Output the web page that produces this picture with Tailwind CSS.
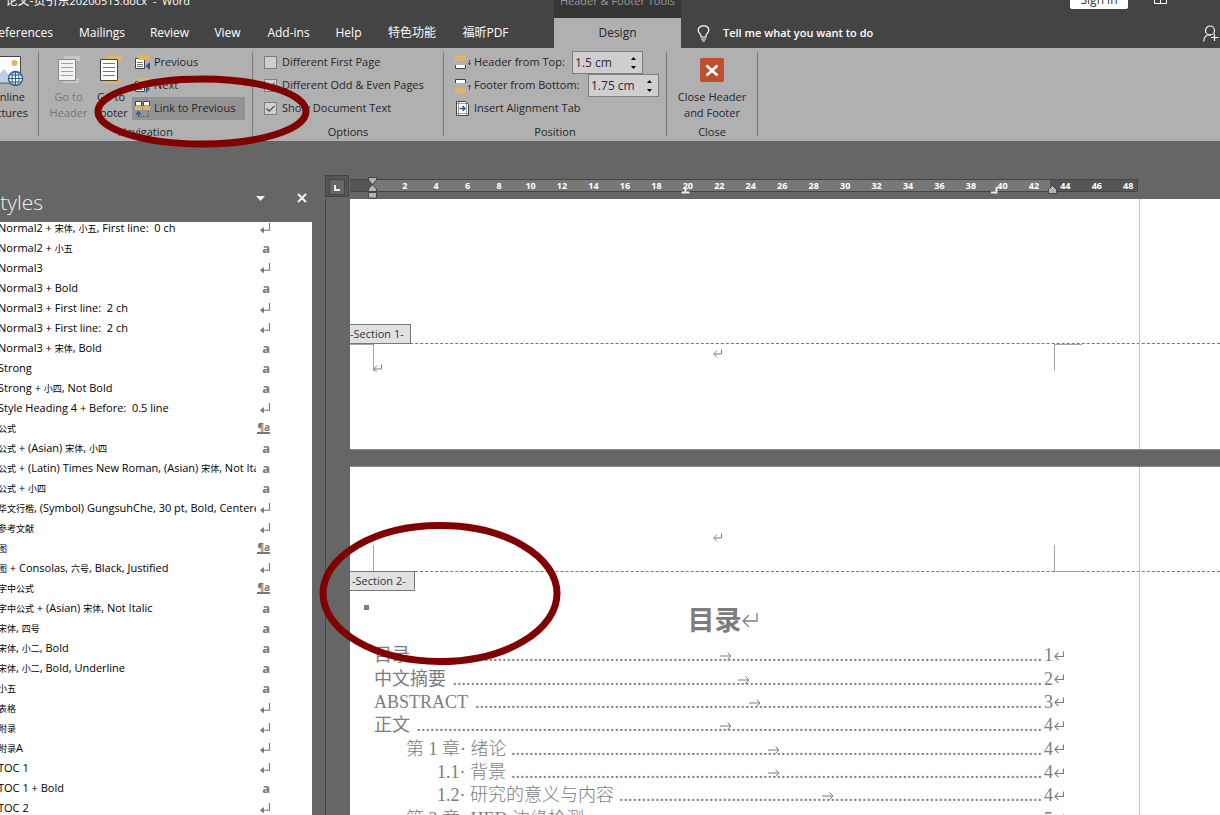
<!DOCTYPE html>
<html lang="en">
<head>
<meta charset="utf-8">
<title>Word</title>
<script src="https://cdn.jsdelivr.net/npm/@tailwindcss/browser@4"></script>
</head>
<body class="relative h-screen overflow-hidden flex flex-col bg-[#666] font-['Open_Sans','Noto_Sans_CJK_SC',sans-serif] text-[11px] text-[#262626]">
<svg class="hidden">
  <symbol id="ret" viewBox="0 0 9 9"><path d="M8.5 0.5V5H1M4 1.5L0.8 5L4 8.3" fill="none" stroke="currentColor"/></symbol>
  <symbol id="para" viewBox="0 0 9 9"><path d="M8.5 0V6.5H2" fill="none" stroke="currentColor"/><path d="M0 6.500L3.500 3.500V9.500Z" fill="currentColor"/></symbol>
  <symbol id="arrow" viewBox="0 0 12 8"><path d="M0 4H11M7.500 0.500L11 4L7.500 7.500" fill="none" stroke="currentColor"/></symbol>
</svg>

<header class="shrink-0 bg-[#444] text-white">
  <div class="flex h-[18px] overflow-hidden">
    <div class="flex w-[190px] justify-end whitespace-pre leading-[16px] -mt-[7px] text-[11px]"><span class="text-[12px]">论文-贡引东</span>20200513.docx  -  Word</div>
    <div class="ml-[364px] w-[127px] bg-[#363636]"><p class="-mt-[7px] text-center leading-[16px] text-[#999]">Header &amp; Footer Tools</p></div>
    <button class="ml-[389px] -mt-[11px] h-5 w-[58px] rounded-xs bg-white text-[12px] leading-[22px] text-[#333]">Sign in</button>
    <button class="ml-[26px] h-1 w-[13px]" aria-label="Ribbon display options"><svg class="h-1 w-[13px]" viewBox="0 0 13 4"><path d="M.5 0V3.500H12.500V0M6.500 0V3.500" fill="none" stroke="#fff"/></svg></button>
  </div>
  <nav class="flex h-[30px] items-center text-[12px]">
    <a href="#" class="flex w-[66px] justify-end pr-[13px]">References</a>
    <a href="#" class="w-[72px] text-center">Mailings</a>
    <a href="#" class="w-[63px] text-center">Review</a>
    <a href="#" class="w-[53px] text-center">View</a>
    <a href="#" class="w-[69px] text-center">Add-ins</a>
    <a href="#" class="w-[51px] text-center">Help</a>
    <a href="#" class="w-[76px] text-center">特色功能</a>
    <a href="#" class="w-[71px] text-center">福昕PDF</a>
    <a href="#" class="ml-[33px] flex h-full w-[127px] items-center justify-center bg-[#b0b0b0] text-[#262626]">Design</a>
    <svg class="ml-4 h-[17px] w-[13px]" viewBox="0 0 13 17"><path d="M4 12V10.500C4 9 1.200 8 1.200 5.200C1.200 2.500 3.500 .8 6.500 .8S11.800 2.500 11.800 5.200C11.800 8 9 9 9 10.500V12ZM4 14H9M5 16H8" fill="none" stroke="#fff" stroke-width="1.200"/></svg>
    <a href="#" class="ml-[13px] text-[11px] font-semibold">Tell me what you want to do</a>
    <button class="ml-auto" aria-label="Share"><svg class="h-[17px] w-[17px]" viewBox="0 0 17 17"><circle cx="7" cy="5.500" r="4.500" fill="none" stroke="#fff" stroke-width="1.200"/><path d="M.6 16.500C1 12 3 10 6 10H8M8 12.500H15.500M11.500 9V16" fill="none" stroke="#fff" stroke-width="1.200"/></svg></button>
  </nav>
</header>

<section class="flex h-[93px] shrink-0 bg-[#b0b0b0] whitespace-nowrap">
  <div class="w-[38px] overflow-hidden pt-[7px]">
    <svg class="h-[31px] w-[24px]" viewBox="0 0 24 31"><path d="M0 1.500H20.500V28H0" fill="#fff" stroke="#444"/><circle cx="14.500" cy="8" r="3" fill="#e3b263"/><path d="M0 18L4 14L9 20V27H0Z" fill="#b9d0e8"/><circle cx="15.500" cy="23.500" r="7" fill="#fff" stroke="#2a5d96" stroke-width="1.400"/><path d="M8.500 23.500H22.500M15.500 16.500V30.500M10 20H21M10 27H21" stroke="#2a5d96"/><ellipse cx="15.500" cy="23.500" rx="3.500" ry="7" fill="none" stroke="#2a5d96"/></svg>
    <div class="flex w-[28px] flex-col items-end pt-[3px] leading-[16px]"><span class="pr-[3px]">Online</span><span>Pictures</span></div>
  </div>
  <div class="mt-1 h-[84px] w-px bg-[#7a7a7a]"></div>

  <div class="w-[213px] pt-[3px]">
    <div class="flex h-[69px] pl-2">
      <button class="flex w-[43px] flex-col items-center leading-[16px] text-[#767676]"><svg class="mt-[4px] mb-[4px] h-[30px] w-[22px] shrink-0" viewBox="0 0 22 30"><path d="M6 1H22V6H6ZM5 23H21V28H5Z" fill="#c6c6c6"/><path d="M.5 4.500H17.500V25.500H.5Z" fill="#f2f2f2" stroke="#8a8a8a"/><path d="M3 8.500H15M3 12.500H15M3 16.500H15M3 20.500H15" stroke="#a0a0a0"/></svg><span>Go to</span><span>Header</span></button>
      <button class="flex w-[42px] flex-col items-center leading-[16px]"><svg class="mt-[4px] mb-[4px] h-[30px] w-[22px] shrink-0" viewBox="0 0 22 30"><path d="M6 1H22V6H6ZM5 24H21V29H5Z" fill="#e3b263"/><path d="M.5 4.500H17.500V25.500H.5Z" fill="#fff" stroke="#444"/><path d="M3 8.500H15M3 12.500H15M3 16.500H15M3 20.500H15" stroke="#777"/></svg><span>Go to</span><span>Footer</span></button>
      <div class="flex w-[113px] flex-col">
        <button class="flex h-[23px] items-center gap-1 pl-[3px]"><svg class="h-[16px] w-[15px]" viewBox="0 0 15 16"><path d="M.5 3.500H9.500V13.500H.5Z" fill="#fff" stroke="#444"/><path d="M3 0H14V5H3Z" fill="#e3b263"/><path d="M2 7.500H8M2 9.500H8M2 11.500H8" stroke="#777"/><path d="M15 7V15L10.500 11Z" fill="#2a5d96"/></svg>Previous</button>
        <button class="flex h-[23px] items-center gap-1 pl-[3px]"><svg class="h-[16px] w-[15px]" viewBox="0 0 15 16"><path d="M.5 3.500H9.500V13.500H.5Z" fill="#fff" stroke="#444"/><path d="M3 0H14V5H3Z" fill="#e3b263"/><path d="M2 7.500H8M2 9.500H8M2 11.500H8" stroke="#777"/><path d="M11 7V15L15 11Z" fill="#2a5d96"/></svg>Next</button>
        <button class="flex h-[23px] items-center gap-1 bg-[#939393] pl-[3px]"><svg class="h-[16px] w-[15px]" viewBox="0 0 15 16"><path d="M.5 .5H6.500V5H.5ZM8.500 .5H14.500V5H8.500Z" fill="#fff" stroke="#444"/><path d="M0 5H7V9H0ZM8 5H15V9H8Z" fill="#e3b263"/><path d="M3.500 16V11M1 13.500L3.500 10.800L6 13.500" fill="none" stroke="#2a5d96" stroke-width="1.400"/><path d="M6 15.500H14M13.500 10V15" stroke="#2a5d96" stroke-dasharray="1 1"/></svg>Link to Previous</button>
      </div>
    </div>
    <p class="h-[21px] text-center leading-[24px]">Navigation</p>
  </div>
  <div class="mt-1 h-[84px] w-px bg-[#7a7a7a]"></div>

  <div class="w-[190px] pt-[3px]">
    <div class="pl-[11px]">
      <label class="relative flex h-[23px] items-center gap-[5px]"><input type="checkbox" class="size-[13px] appearance-none border border-[#7d7d7d] bg-[#cfcfcf]">Different First Page</label>
      <label class="relative flex h-[23px] items-center gap-[5px]"><input type="checkbox" checked class="peer size-[13px] appearance-none border border-[#7d7d7d] bg-[#cfcfcf]"><svg class="absolute left-0 hidden size-[13px] peer-checked:block" viewBox="0 0 13 13"><path d="M2.500 6.500L5.200 9.200L10.500 3.800" fill="none" stroke="#444" stroke-width="1.200"/></svg>Different Odd &amp; Even Pages</label>
      <label class="relative flex h-[23px] items-center gap-[5px]"><input type="checkbox" checked class="peer size-[13px] appearance-none border border-[#7d7d7d] bg-[#cfcfcf]"><svg class="absolute left-0 hidden size-[13px] peer-checked:block" viewBox="0 0 13 13"><path d="M2.500 6.500L5.200 9.200L10.500 3.800" fill="none" stroke="#444" stroke-width="1.200"/></svg>Show Document Text</label>
    </div>
    <p class="h-[21px] text-center leading-[24px]">Options</p>
  </div>
  <div class="mt-1 h-[84px] w-px bg-[#7a7a7a]"></div>

  <div class="w-[222px] pt-[3px]">
    <div class="pl-[11px]">
      <div class="flex h-[23px] items-center"><svg class="mr-[3px] h-[15px] w-[16px]" viewBox="0 0 16 15"><path d="M0 1H11V6H0Z" fill="#e3b263"/><path d="M0 8.500H11" stroke="#e3b263" stroke-dasharray="1 1"/><path d="M.5 10V13.500H10.500V10" fill="#fff" stroke="#444"/><path d="M14.500 5V10M13 8L14.500 10L16 8" fill="none" stroke="#2a5d96"/></svg><label for="ht" class="w-[98px]">Header from Top:</label>
        <div class="flex h-[23px] w-[71px] items-center border border-[#7d7d7d] bg-[#cfcfcf]"><input id="ht" value="1.5 cm" class="w-[58px] pl-[2px] text-[12px] text-[#3a1f3a] outline-none"><div class="flex flex-col gap-[6px]"><button aria-label="Increase header distance"><svg class="block h-[3px] w-[5px]" viewBox="0 0 5 3"><path d="M0 3L2.500 0L5 3Z"/></svg></button><button aria-label="Decrease header distance"><svg class="block h-[3px] w-[5px]" viewBox="0 0 5 3"><path d="M0 0L2.500 3L5 0Z"/></svg></button></div></div></div>
      <div class="flex h-[23px] items-center"><svg class="mr-[3px] h-[15px] w-[16px]" viewBox="0 0 16 15"><path d="M.5 5V1.500H10.500V5" fill="#fff" stroke="#444"/><path d="M0 7.500H11" stroke="#e3b263" stroke-dasharray="1 1"/><path d="M0 10H11V15H0Z" fill="#e3b263"/><path d="M14.500 12V7M13 9L14.500 7L16 9" fill="none" stroke="#2a5d96"/></svg><label for="fb" class="w-[114px]">Footer from Bottom:</label>
        <div class="flex h-[23px] w-[71px] items-center border border-[#7d7d7d] bg-[#cfcfcf]"><input id="fb" value="1.75 cm" class="w-[58px] pl-[2px] text-[12px] text-[#3a1f3a] outline-none"><div class="flex flex-col gap-[6px]"><button aria-label="Increase footer distance"><svg class="block h-[3px] w-[5px]" viewBox="0 0 5 3"><path d="M0 3L2.500 0L5 3Z"/></svg></button><button aria-label="Decrease footer distance"><svg class="block h-[3px] w-[5px]" viewBox="0 0 5 3"><path d="M0 0L2.500 3L5 0Z"/></svg></button></div></div></div>
      <button class="flex h-[23px] items-center gap-[3px]"><svg class="h-[15px] w-[16px]" viewBox="0 0 16 15"><path d="M1.500 .5H10.500L13.500 3.500V14.500H1.500Z" fill="#fff" stroke="#444"/><path d="M3.500 1V14M11.500 2V14M2 2.500H12M2 12.500H13" stroke="#777" stroke-width=".7"/><path d="M4.500 7.500H10M7.500 5L10 7.500L7.500 10" fill="none" stroke="#2a5d96" stroke-width="1.400"/></svg>Insert Alignment Tab</button>
    </div>
    <p class="h-[21px] text-center leading-[24px]">Position</p>
  </div>
  <div class="mt-1 h-[84px] w-px bg-[#7a7a7a]"></div>

  <div class="w-[90px] pt-[3px]">
    <button class="flex h-[69px] w-full flex-col items-center leading-[16px]"><svg class="mt-[7px] mb-[7px] size-6 shrink-0" viewBox="0 0 24 24"><rect width="24" height="24" rx="2" fill="#c04d2c"/><path d="M6.500 7.500L17.500 17.500M17.500 7.500L6.500 17.500" stroke="#fff" stroke-width="2.800"/></svg><span>Close Header</span><span>and Footer</span></button>
    <p class="h-[21px] text-center leading-[24px]">Close</p>
  </div>
  <div class="mt-1 h-[84px] w-px bg-[#7a7a7a]"></div>
</section>

<main class="flex min-h-0 flex-1">
  <aside class="flex w-[312px] shrink-0 flex-col overflow-hidden">
    <div class="flex h-[81px] shrink-0 items-end pb-[5px] text-[#f0f0f0]">
      <h2 class="flex w-[43px] justify-end text-[21px] leading-[30px] font-light">Styles</h2>
      <button class="ml-[213px] mb-[16px]" aria-label="Pane options"><svg class="block h-[5px] w-[9px]" viewBox="0 0 9 5"><path d="M0 0H9L4.500 5Z" fill="currentColor"/></svg></button>
      <button class="ml-8 mb-[14px]" aria-label="Close pane"><svg class="block size-[10px]" viewBox="0 0 10 10"><path d="M1 1L9 9M9 1L1 9" stroke="currentColor" stroke-width="2.200"/></svg></button>
    </div>
    <div class="min-h-0 flex-1 overflow-hidden bg-white text-black"><ul id="styles" class="-mt-1"></ul></div>
  </aside>

  <div class="ml-[13px] flex min-w-0 flex-1 flex-col pt-[34px]">
    <div class="flex h-6 shrink-0">
      <div class="h-[22px] w-[24px] border border-[#444] bg-[#555] p-[3px]"><button class="block size-4 border border-[#444] bg-[#666]" aria-label="Left tab"><svg class="block size-[14px]" viewBox="0 0 14 14"><path d="M5 5V10H10" fill="none" stroke="#eee" stroke-width="2"/></svg></button></div>
      <div class="relative mt-1 ml-px h-[13px] w-[788px] border-y border-r border-[#444] bg-[#555]">
        <div class="ml-[22px] h-[11px] w-[678px] bg-[#777]"></div>
        <div id="ticks" class="absolute top-0 left-[39px] grid w-[755px] grid-cols-24 text-center text-[9px] leading-[12px] font-bold text-white"></div>
        <svg class="absolute -top-1 left-[18px] h-[23px] w-[10px]" viewBox="0 0 10 23"><path d="M.5 1.500H8.500V4L4.500 8.500L.5 4ZM4.500 8.500L8.500 13V15.500H.5V13ZM.5 16.500H8.500V22H.5Z" fill="#b5b5b5" stroke="#444"/></svg>
        <svg class="absolute top-[6px] left-[331px] h-[8px] w-[9px]" viewBox="0 0 9 8"><path d="M4.500 1V6M.5 6.500H8.500" stroke="#eee" stroke-width="2"/></svg>
        <svg class="absolute top-[6px] left-[641px] h-[8px] w-[7px]" viewBox="0 0 7 8"><path d="M5.500 1V6.500H0" fill="none" stroke="#eee" stroke-width="2"/></svg>
        <svg class="absolute top-[5px] left-[698px] h-[9px] w-[9px]" viewBox="0 0 9 9"><path d="M.5 8.500V4.500L4.500 .5L8.500 4.500V8.500Z" fill="#b5b5b5" stroke="#444"/></svg>
      </div>
    </div>

    <div class="flex min-h-0 flex-1 border-l border-[#444] pl-6">
      <div class="flex min-w-0 flex-1 flex-col gap-[16px] text-[#7d7d7d]">
        <article class="relative h-[251px] shrink-0 border-b border-[#8a8a8a] bg-white">
          <div class="flex h-[145px] items-end border-b border-dashed border-[#777]"><div class="-mb-px h-5 w-[61px] border border-l-0 border-[#777] bg-[#e1e1e1] leading-[18px] text-[#333]">-Section 1-</div></div>
          <div class="flex h-[27px]">
            <div class="w-6 border-t border-r border-[#a6a6a6]"></div>
            <div class="flex w-[680px] flex-col pt-[5px]"><svg class="ml-[339px] size-[9px] shrink-0"><use href="#ret"/></svg><svg class="mt-[6px] -ml-px size-[9px] shrink-0"><use href="#ret"/></svg></div>
            <div class="w-7 border-t border-l border-[#a6a6a6]"></div>
          </div>
          <div class="absolute inset-y-0 left-[789px] w-px bg-[#c6c6c6]"></div>
        </article>

        <article class="relative min-h-0 flex-1 overflow-hidden border-t border-[#8a8a8a] bg-white">
          <div class="flex h-[105px] items-end border-b border-dashed border-[#777]">
            <div class="h-[26px] w-6 border-r border-[#a6a6a6]"></div>
            <div class="h-[38px] w-[680px]"><svg class="ml-[339px] size-[9px]"><use href="#ret"/></svg></div>
            <div class="-mb-px h-[27px] w-7 border-b border-l border-[#a6a6a6]"></div>
          </div>
          <div class="-mt-px h-5 w-[65px] border border-l-0 border-[#777] bg-[#e1e1e1] pl-[2px] leading-[18px] text-[#333]">-Section 2-</div>
          <div class="absolute top-[138px] left-[14px] size-[5px] bg-[#7d7d7d]"></div>
          <h1 class="mt-[8px] ml-6 flex h-[42px] w-[697px] items-center justify-center text-[27px] font-bold">目录<svg class="h-[14px] w-[16px]" viewBox="0 0 16 14"><path d="M15 0V8H1M7 2L1 8L7 14" fill="none" stroke="currentColor" stroke-width="1.300"/></svg></h1>
          <ol id="toc" class="mt-[3px] ml-6 flex h-[187px] w-[690px] shrink-0 flex-col font-['Liberation_Serif','Noto_Sans_CJK_SC',serif] text-[18px]"></ol>
          <div class="absolute inset-y-0 left-[789px] w-px bg-[#c6c6c6]"></div>
        </article>
      </div>
    </div>
  </div>
</main>

<svg class="pointer-events-none absolute top-0 left-0 h-[700px] w-[600px]" viewBox="0 0 600 700" fill="none" stroke="#800000" stroke-width="7"><ellipse cx="202" cy="111.500" rx="104" ry="32.500"/><ellipse cx="440" cy="593.500" rx="117" ry="68"/></svg>

<script>
const mark = {
  p: '<svg class="size-[10px] text-[#777]"><use href="#para"/></svg>',
  a: '<b class="text-[13px] leading-[18px] text-[#777]">a</b>',
  l: '<b class="border-b-2 border-[#777] text-[10px] leading-[10px] text-[#777]">¶a</b>'
};
const styles = [
  ['Normal2 + 宋体, 小五, First line:  0 ch','p'],['Normal2 + 小五','a'],['Normal3','p'],['Normal3 + Bold','a'],
  ['Normal3 + First line:  2 ch','p'],['Normal3 + First line:  2 ch','p'],['Normal3 + 宋体, Bold','a'],['Strong','a'],
  ['Strong + 小四, Not Bold','a'],['Style Heading 4 + Before:  0.5 line','p'],['公式','l'],['公式 + (Asian) 宋体, 小四','a'],
  ['公式 + (Latin) Times New Roman, (Asian) 宋体, Not Ita','a'],['公式 + 小四','a'],
  ['华文行楷, (Symbol) GungsuhChe, 30 pt, Bold, Centered','p'],['参考文献','p'],['图','l'],
  ['图 + Consolas, 六号, Black, Justified','p'],['字中公式','l'],['字中公式 + (Asian) 宋体, Not Italic','a'],
  ['宋体, 四号','a'],['宋体, 小二, Bold','a'],['宋体, 小二, Bold, Underline','a'],['小五','a'],['表格','p'],['附录','p'],
  ['附录A','p'],['TOC 1','p'],['TOC 1 + Bold','a'],['TOC 2','p']
];
document.getElementById('styles').innerHTML = styles.map(([t, m]) =>
  '<li class="flex h-5 items-center"><span class="-ml-[2px] w-[258px] overflow-hidden whitespace-pre leading-[20px]">' +
  t.replace(/[\u4e00-\u9fff]+/g, s => '<span class="text-[9px]">' + s + '</span>') +
  '</span><span class="flex h-[18px] w-[14px] items-center justify-end">' + mark[m] + '</span></li>').join('');

document.getElementById('ticks').innerHTML = Array.from({length: 24}, (_, i) => '<span>' + (i + 1) * 2 + '</span>').join('');

// title, page, level, number of leader dots
const toc = [['目录','1',0,139],['中文摘要','2',0,131],['ABSTRACT','3',0,126],['正文','4',0,139],['第 1 章· 绪论','4',1,118],['1.1· 背景','4',2,118],['1.2· 研究的意义与内容','4',2,94],['第 2 章· HED 边缘检测','5',1,101]];
const indent = ['pl-0', 'pl-8 font-light', 'pl-[63px] font-light'];
document.getElementById('toc').innerHTML = toc.map(([t, n, l, d]) =>
  '<li class="flex min-h-0 flex-1 items-center leading-[23px] whitespace-nowrap ' + indent[l] + '"><a href="#">' + t + '</a>' +
  '<span class="relative flex h-[23px] min-w-0 flex-1 justify-end">' + '.'.repeat(d) +
  '<svg class="absolute top-2 left-1/2 h-2 w-3 -translate-x-1/2"><use href="#arrow"/></svg></span>' +
  '<span class="pl-[2px]">' + n + '</span><svg class="ml-px size-[10px]"><use href="#ret"/></svg></li>').join('');
</script>
</body>
</html>
